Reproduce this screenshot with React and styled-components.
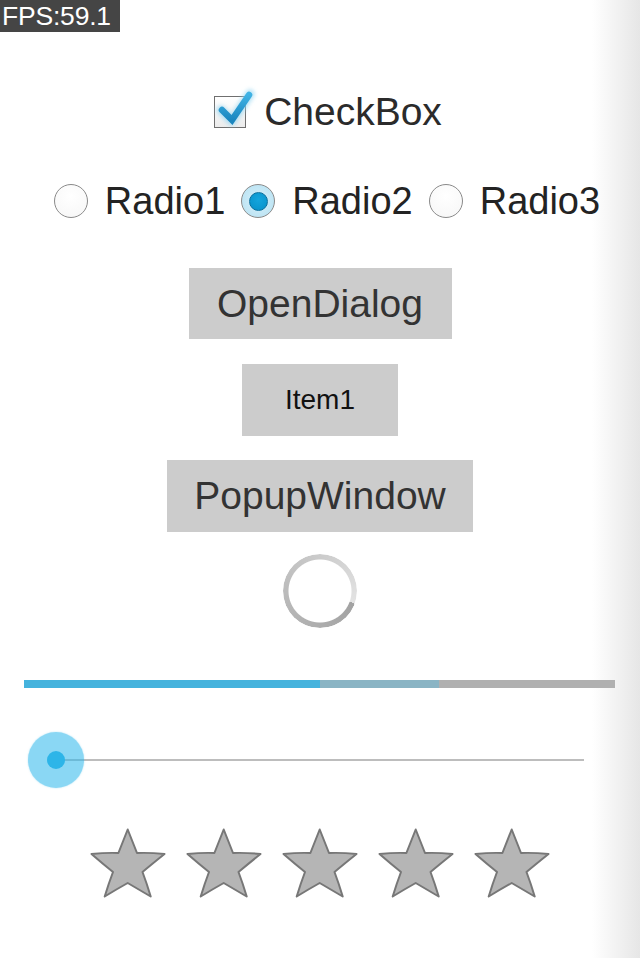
import React from "react";
import styled, { createGlobalStyle } from "styled-components";

const Global = createGlobalStyle`
  html, body { margin: 0; padding: 0; }
  body {
    font-family: "Liberation Sans", Arial, sans-serif;
    background: #fff;
  }
`;

const Page = styled.div`
  position: relative;
  width: 640px;
  height: 958px;
  overflow: hidden;
  background: linear-gradient(to right, #ffffff 0, #ffffff 592px, #e6e6e6 640px);
  display: flex;
  flex-direction: column;
  align-items: center;
`;

const Fps = styled.div`
  position: absolute;
  left: 0;
  top: 0;
  width: 120px;
  height: 32px;
  background: #454545;
  color: #fff;
  font-size: 26.5px;
  line-height: 32px;
  padding-left: 2px;
  box-sizing: border-box;
  letter-spacing: -0.2px;
`;

const CheckRow = styled.label`
  margin-top: 92px;
  height: 40px;
  display: flex;
  align-items: center;
  gap: 18px;
  padding-left: 16px;
  font-size: 39px;
  color: #2b2b2b;
`;

const CheckBoxBox = styled.span`
  position: relative;
  width: 30px;
  height: 30px;
  border: 1px solid #6f6f6f;
  background: linear-gradient(#ffffff, #ececec);
  flex: none;
`;

const CheckMark = styled.svg`
  position: absolute;
  left: 3px;
  top: -4px;
  overflow: visible;
`;

const RadioRow = styled.div`
  margin-top: 49px;
  height: 40px;
  display: flex;
  align-items: center;
  padding-left: 14px;
  gap: 16px;
`;

const RadioItem = styled.label`
  display: flex;
  align-items: center;
  gap: 17px;
  font-size: 38px;
  color: #232323;
`;

const RadioCircle = styled.span`
  width: 32px;
  height: 32px;
  border-radius: 50%;
  border: 1.5px solid #8a8a8a;
  background: ${(p) =>
    p.$checked
      ? "radial-gradient(circle, #d8f0fa 0, #bfe5f4 70%, #f4fbfe 100%)"
      : "radial-gradient(circle at 50% 35%, #ffffff, #f6f6f6)"};
  display: flex;
  align-items: center;
  justify-content: center;
  flex: none;
`;

const RadioDot = styled.span`
  width: 17px;
  height: 17px;
  border-radius: 50%;
  background: radial-gradient(circle at 50% 40%, #14a5dd, #0790c8);
  border: 1px solid #0b6f9c;
`;

const Button = styled.button`
  margin-top: ${(p) => p.$top}px;
  width: ${(p) => p.$w}px;
  height: ${(p) => p.$h}px;
  background: #cccccc;
  border: none;
  padding: 0;
  font-family: "Liberation Sans", Arial, sans-serif;
  font-size: ${(p) => p.$fs}px;
  color: ${(p) => p.$color};
  display: flex;
  align-items: center;
  justify-content: center;
  flex: none;
`;

const Spinner = styled.div`
  margin-top: 22px;
  width: 74px;
  height: 74px;
  border-radius: 50%;
  background: conic-gradient(
    from 110deg,
    #a2a2a2 0deg,
    #b0b0b0 90deg,
    #bdbdbd 170deg,
    #cbcbcb 250deg,
    #e3e3e3 359deg
  );
  -webkit-mask: radial-gradient(circle, transparent 31px, #000 32px);
  mask: radial-gradient(circle, transparent 31px, #000 32px);
  flex: none;
`;

const Progress = styled.div`
  margin-top: 52px;
  align-self: flex-start;
  margin-left: 24px;
  width: 591px;
  height: 8px;
  display: flex;
  background: #b0b0b0;
`;

const ProgressSeg = styled.div`
  height: 100%;
  background: ${(p) => p.$color};
`;

const Slider = styled.div`
  position: relative;
  margin-top: 44px;
  align-self: flex-start;
  margin-left: 28px;
  width: 556px;
  height: 56px;
`;

const Track = styled.div`
  position: absolute;
  left: 28px;
  right: 0;
  top: 27px;
  height: 2px;
  background: #bdbdbd;
`;

const Thumb = styled.div`
  position: absolute;
  left: 0;
  top: 0;
  width: 56px;
  height: 56px;
  border-radius: 50%;
  background: rgba(50, 185, 235, 0.57);
  box-shadow: 0 0 1.5px rgba(50, 185, 235, 0.5);
  display: flex;
  align-items: center;
  justify-content: center;
`;

const ThumbDot = styled.div`
  width: 18px;
  height: 18px;
  border-radius: 50%;
  background: #2db5e8;
`;

const Stars = styled.div`
  margin-top: 40px;
  display: flex;
  gap: 20px;
`;

const StarIcon = () => (
  <svg width="76" height="70" viewBox="0 0 76 70">
    <path
      d="M37.7 1.5 L47 25 Q60 24.5 74.5 26 Q62 36 52.5 44 Q57 56 60.7 68.5 Q48 61 37.7 55 Q27 61 14.7 68.5 Q18.5 56 23 44 Q13 36 1.5 26 Q16 24.5 28.4 25 Z"
      fill="#b5b5b5"
      stroke="#777"
      strokeWidth="2"
      strokeLinejoin="round"
    />
  </svg>
);

const Radio = ({ label, checked }) => (
  <RadioItem>
    <RadioCircle $checked={checked}>{checked && <RadioDot />}</RadioCircle>
    {label}
  </RadioItem>
);

export default function App() {
  return (
    <>
      <Global />
      <Page>
        <Fps>FPS:59.1</Fps>
        <CheckRow>
          <CheckBoxBox>
            <CheckMark width="32" height="32" viewBox="0 0 32 32">
              <defs>
                <linearGradient id="chk" x1="0" y1="0" x2="0" y2="1">
                  <stop offset="0" stopColor="#3fb2e4" />
                  <stop offset="1" stopColor="#1a86bf" />
                </linearGradient>
                <filter id="glow" x="-50%" y="-50%" width="200%" height="200%">
                  <feGaussianBlur stdDeviation="2" />
                </filter>
              </defs>
              <path
                d="M3 17 L14 28 L32 1"
                fill="none"
                stroke="#9bd8f2"
                strokeWidth="9"
                strokeLinecap="round"
                strokeLinejoin="round"
                filter="url(#glow)"
                opacity="0.8"
              />
              <path
                d="M4 17 L14 27 L31 2"
                fill="none"
                stroke="url(#chk)"
                strokeWidth="6.5"
                strokeLinecap="round"
                strokeLinejoin="miter"
              />
            </CheckMark>
          </CheckBoxBox>
          CheckBox
        </CheckRow>
        <RadioRow>
          <Radio label="Radio1" />
          <Radio label="Radio2" checked />
          <Radio label="Radio3" />
        </RadioRow>
        <Button $top={47} $w={263} $h={71} $fs={39} $color="#333">
          OpenDialog
        </Button>
        <Button $top={25} $w={156} $h={72} $fs={28} $color="#111">
          Item1
        </Button>
        <Button $top={24} $w={306} $h={72} $fs={39} $color="#333">
          PopupWindow
        </Button>
        <Spinner />
        <Progress>
          <ProgressSeg $color="#45b3dd" style={{ width: "296px" }} />
          <ProgressSeg $color="#8ab4c4" style={{ width: "119px" }} />
        </Progress>
        <Slider>
          <Track />
          <Thumb>
            <ThumbDot />
          </Thumb>
        </Slider>
        <Stars>
          <StarIcon />
          <StarIcon />
          <StarIcon />
          <StarIcon />
          <StarIcon />
        </Stars>
      </Page>
    </>
  );
}
